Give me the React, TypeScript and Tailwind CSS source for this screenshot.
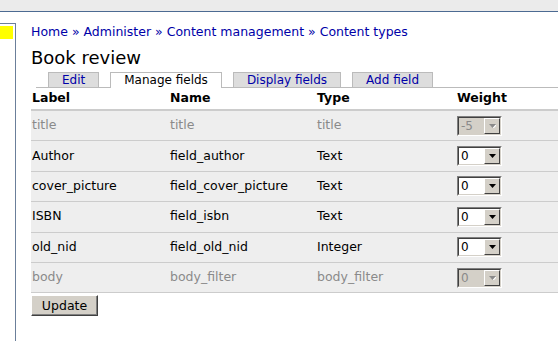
import React from 'react';

type Row = { label: string; name: string; type: string; weight: string; disabled?: boolean };

const rows: Row[] = [
  { label: 'title', name: 'title', type: 'title', weight: '-5', disabled: true },
  { label: 'Author', name: 'field_author', type: 'Text', weight: '0' },
  { label: 'cover_picture', name: 'field_cover_picture', type: 'Text', weight: '0' },
  { label: 'ISBN', name: 'field_isbn', type: 'Text', weight: '0' },
  { label: 'old_nid', name: 'field_old_nid', type: 'Integer', weight: '0' },
  { label: 'body', name: 'body_filter', type: 'body_filter', weight: '0', disabled: true },
];

// Win2k-style select box
function WeightSelect({ value, disabled }: { value: string; disabled?: boolean }) {
  return (
    <div className="w-[45px] h-[20px] border border-t-[#808080] border-l-[#808080] border-b-white border-r-white">
      <div
        className={`flex h-full border border-t-[#404040] border-l-[#404040] border-b-[#d4d0c8] border-r-[#d4d0c8] ${
          disabled ? 'bg-[#d4d0c8]' : 'bg-white'
        }`}
      >
        <span className={`flex-1 pl-[2px] text-[12px] leading-[16px] ${disabled ? 'text-[#8a8a8a]' : 'text-black'}`}>
          {value}
        </span>
        <div className="w-[16px] h-[16px] bg-[#d4d0c8] border border-t-white border-l-white border-b-[#404040] border-r-[#404040] flex items-center justify-center">
          <svg width="7" height="4" viewBox="0 0 7 4">
            {disabled && <path d="M1 1h7L4.5 4.5z" fill="#fff" />}
            <path d="M0 0h7L3.5 4z" fill={disabled ? '#8a8a8a' : '#000'} />
          </svg>
        </div>
      </div>
    </div>
  );
}

function Tab({ label, active }: { label: string; active?: boolean }) {
  if (active) {
    return (
      <div className="h-[16px] -mb-px px-[13px] bg-white border border-b-0 border-[#bbbbbb] text-black text-[12px] leading-[14px]">
        {label}
      </div>
    );
  }
  return (
    <div className="h-[15px] px-[13px] bg-[#dddddd] border border-b-0 border-[#bbbbbb] text-[#0000a8] text-[12px] leading-[14px]">
      {label}
    </div>
  );
}

export default function App() {
  return (
    <div className="w-[558px] h-[341px] bg-white overflow-hidden font-['DejaVu_Sans',Verdana,sans-serif]">
      {/* top band */}
      <div className="h-[11px] bg-[#ebebeb]" />
      <div className="h-px bg-[#4c6a92]" />

      <div className="flex">
        {/* left block */}
        <div className="w-[16px] mt-[11px] h-[320px] border-t border-r border-[#6b7f9a] shrink-0">
          <div className="mt-[2px] w-[13px] h-[13px] bg-[#ffff00]" />
        </div>

        {/* content */}
        <div className="flex-1 pl-[15px] pt-[12px]">
          <div className="h-[15px] text-[12.5px] leading-[15px] text-[#0000a8] whitespace-nowrap">
            Home » Administer » Content management » Content types
          </div>

          <h1 className="mt-[8px] h-[22px] text-[18px] leading-[22px] text-black">Book review</h1>

          <div className="mt-[3px] ml-[5px] flex items-end gap-[11px] pl-[12px] border-b border-[#bbbbbb] h-[16px]">
            <Tab label="Edit" />
            <Tab label="Manage fields" active />
            <Tab label="Display fields" />
            <Tab label="Add field" />
          </div>

          {/* fields table */}
          <div className="text-[12.5px]">
            <div className="grid grid-cols-[138px_147px_140px_1fr] h-[23px] items-center border-b-2 border-[#cccccc] pl-[1px] font-bold text-black">
              <span>Label</span>
              <span>Name</span>
              <span>Type</span>
              <span>Weight</span>
            </div>
            {rows.map((r) => (
              <div
                key={r.label}
                className={`grid grid-cols-[138px_147px_140px_1fr] h-[30.4px] items-center bg-[#eeeeee] border-b border-[#cccccc] pl-[1px] ${
                  r.disabled ? 'text-[#8a8a8a]' : 'text-black'
                }`}
              >
                <span>{r.label}</span>
                <span>{r.name}</span>
                <span>{r.type}</span>
                <WeightSelect value={r.weight} disabled={r.disabled} />
              </div>
            ))}
          </div>

          <button className="mt-[2px] h-[21px] w-[67px] bg-[#d4d0c8] border border-t-white border-l-white border-b-[#404040] border-r-[#404040] text-[12.5px] leading-[17px] text-black shadow-[inset_-1px_-1px_0_#808080]">
            Update
          </button>
        </div>
      </div>
    </div>
  );
}
